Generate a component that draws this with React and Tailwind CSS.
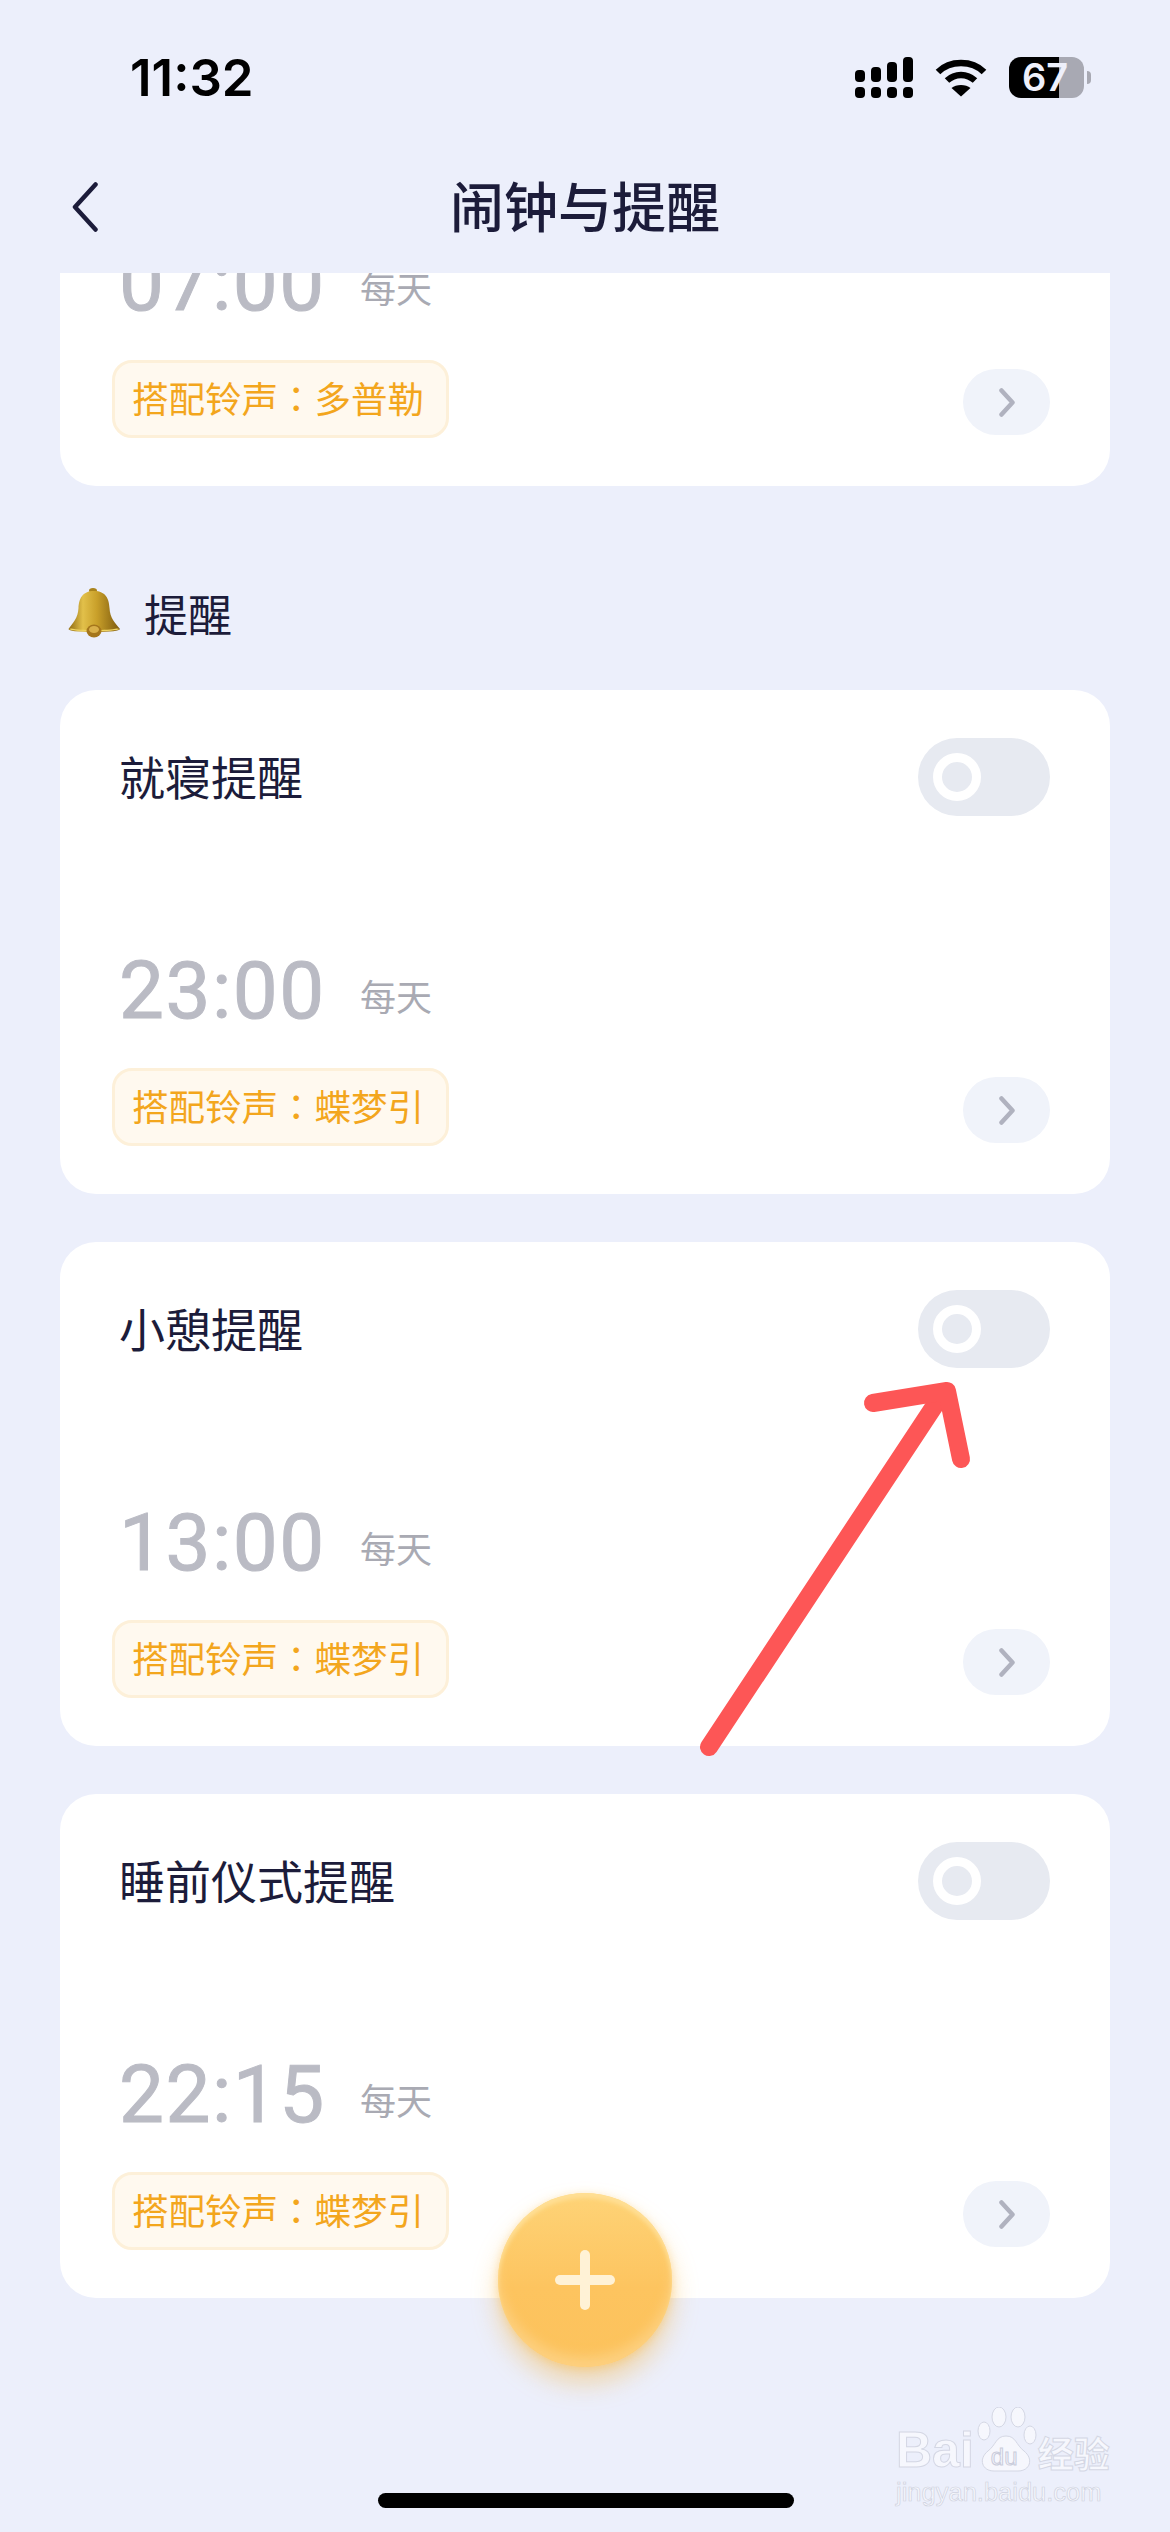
import React from 'react';

const cjk = "font-['Noto_Sans_CJK_SC','Noto_Sans',sans-serif]";

function Signal() {
  const tops = [70, 67, 62, 57];
  return (
    <svg width="58" height="42" viewBox="856 57 58 42" fill="#000">
      {tops.map((t, i) => (
        <g key={i}>
          <rect x={856 + i * 16} y={t} width="10" height={82 - t} rx="4" />
          <rect x={856 + i * 16} y="87" width="10" height="11" rx="4" />
        </g>
      ))}
    </svg>
  );
}

function Wifi() {
  return (
    <svg width="52" height="38" viewBox="0 0 52 38" fill="none" stroke="#000" strokeWidth="6.5">
      <path d="M3 13 C15 1 37 1 49 13" />
      <path d="M12 21.5 C20 14 32 14 40 21.5" />
      <path d="M26 37.5 L16.5 29 C21 25 31 25 35.5 29 Z" fill="#000" stroke="none" />
    </svg>
  );
}

function Battery() {
  return (
    <div className="flex items-center">
      <div className="relative w-[75px] h-[41px] flex">
        <div className="w-[50px] h-full bg-black rounded-l-[12px]" />
        <div className="w-[25px] h-full bg-[#a8a9b3] rounded-r-[12px]" />
        <span className="absolute left-[13px] top-0 leading-[41px] text-[38px] font-semibold text-[#eef0fb] font-['Inter',sans-serif]">67</span>
      </div>
      <div className="ml-[3px] w-[4px] h-[13px] rounded-r-full bg-[#a8a9b3]" />
    </div>
  );
}

function Bell() {
  return (
    <svg width="52" height="50" viewBox="0 0 52 50">
      <defs>
        <linearGradient id="bellBody" x1="0" y1="0" x2="1" y2="0">
          <stop offset="0" stopColor="#8f6a12" />
          <stop offset="0.28" stopColor="#e2c04a" />
          <stop offset="0.55" stopColor="#c9a02a" />
          <stop offset="1" stopColor="#7d5a0e" />
        </linearGradient>
      </defs>
      <ellipse cx="25" cy="2.5" rx="4" ry="2.5" fill="#a9831c" />
      <path d="M26 3 C14 3 11 11 10.5 20 C10 30 5 35 .5 41 C1 43 8 44 26 44 C44 44 51 43 52 41 C47 35 42 30 41.5 20 C41 11 38 3 26 3 Z" fill="url(#bellBody)" />
      <path d="M3 40.5 C12 42.5 40 42.5 49 40.5 L51.5 41 C48 44 4 44 1 41 Z" fill="#f0d565" />
      <ellipse cx="26" cy="43" rx="7.5" ry="6.5" fill="#a5761c" />
      <ellipse cx="26" cy="41.5" rx="5" ry="3.5" fill="#d9b04a" />
    </svg>
  );
}

function Chevron() {
  return (
    <svg width="16" height="29" viewBox="0 0 16 29" fill="none" stroke="#b0b2bf" strokeWidth="4.5" strokeLinecap="round" strokeLinejoin="round">
      <path d="M2.5 2.5 L13.5 14.5 L2.5 26.5" />
    </svg>
  );
}

function Tag({ ring }) {
  return (
    <div className="w-[337px] h-[78px] -ml-[8px] box-border rounded-[20px] border-[3px] border-[#fdf0d9] bg-[#fff9ef] pl-[17px] text-[36.5px] leading-[70px] whitespace-nowrap text-[#f3a61d]">
      搭配铃声<span className="font-['Noto_Sans_CJK_TC',sans-serif]">：</span>{ring}
    </div>
  );
}

function BottomRow({ ring }) {
  return (
    <div className="flex items-start justify-between">
      <Tag ring={ring} />
      <button className="w-[87px] h-[66px] mt-[9px] rounded-full bg-[#f0f3fa] flex items-center justify-center">
        <Chevron />
      </button>
    </div>
  );
}

function TimeRow({ time }) {
  return (
    <div className="flex items-start h-[80px]">
      <span className="w-[240px] -ml-[1px] text-[80px] leading-[80px] font-normal tracking-[1.5px] text-[#babbc4] font-['Roboto',sans-serif] [-webkit-text-stroke:1px_#babbc4]">{time}</span>
      <span className="ml-[1px] mt-[26px] text-[36px] leading-[36px] text-[#a9aab3]">每天</span>
    </div>
  );
}

function ReminderCard({ title, time, ring }) {
  return (
    <div className="bg-white rounded-[36px] h-[504px] pl-[60px] pr-[60px] pt-[48px]">
      <div className="flex items-center justify-between h-[78px]">
        <span className="text-[46px] leading-[60px] pb-[4px] -ml-[1px] text-[#1c1c3a]">{title}</span>
        <div className="w-[132px] h-[78px] rounded-full bg-[#e7eaf1] flex items-center pl-[15px]">
          <div className="w-[48px] h-[48px] rounded-full border-[9px] border-white" />
        </div>
      </div>
      <div className="mt-[135px]">
        <TimeRow time={time} />
      </div>
      <div className="mt-[37px]">
        <BottomRow ring={ring} />
      </div>
    </div>
  );
}

function Watermark() {
  return (
    <div className="absolute left-[896px] top-[2407px] w-[214px] text-[#f6f7fd]">
      <div className="flex items-end h-[65px]">
        <span className="text-[50px] leading-[44px] font-bold font-['Liberation_Sans',sans-serif] [-webkit-text-stroke:1px_#d4d7e4]">Bai</span>
        <div className="relative w-[64px] h-[65px]">
          <svg width="64" height="65" viewBox="0 0 64 65" fill="#f6f7fd" stroke="#d4d7e4" strokeWidth="1">
            <ellipse cx="10" cy="24" rx="6" ry="9" />
            <ellipse cx="25" cy="10" rx="7" ry="10" />
            <ellipse cx="44" cy="10" rx="7" ry="10" />
            <ellipse cx="56" cy="28" rx="6" ry="9" />
            <path d="M32 29 C22 29 22 38 14 44 C4 52 8 64 20 64 L44 64 C56 64 60 52 50 44 C42 38 42 29 32 29 Z" />
          </svg>
          <span className="absolute left-[17px] top-[38px] text-[24px] leading-[24px] text-[#f6f7fd] font-['Liberation_Sans',sans-serif] [-webkit-text-stroke:1px_#c9ccdb]">du</span>
        </div>
        <span className="text-[36px] leading-[40px] font-bold [-webkit-text-stroke:1px_#d4d7e4]">经验</span>
      </div>
      <div className="mt-[6px] text-[25.5px] leading-[28px] whitespace-nowrap font-['Liberation_Sans',sans-serif] [-webkit-text-stroke:0.7px_#cfd2e0] text-[#f6f7fd]">jingyan.baidu.com</div>
    </div>
  );
}

export default function App() {
  return (
    <div className={`relative w-[1170px] h-[2532px] overflow-hidden bg-[#eceffb] ${cjk}`}>
      {/* status bar + nav */}
      <div className="h-[273px]">
        <div className="flex items-start justify-between pt-[57px] pl-[130px] pr-[79px] h-[150px]">
          <span className="text-[51px] leading-[42px] font-semibold text-black font-['Inter',sans-serif]">11:32</span>
          <div className="flex items-start gap-[22px]">
            <Signal />
            <div className="mt-[2px]"><Wifi /></div>
            <Battery />
          </div>
        </div>
        <div className="grid grid-cols-[1fr_auto_1fr] items-center pl-[72px] pr-[72px] h-[114px]">
          <svg width="26" height="50" viewBox="0 0 26 50" fill="none" stroke="#1c1c3a" strokeWidth="4.5" strokeLinecap="round" strokeLinejoin="round">
            <path d="M23.5 2.5 L3 25 L23.5 47.5" />
          </svg>
          <span className="text-[54px] leading-[60px] pb-[4px] font-medium text-[#1c1c3a]">闹钟与提醒</span>
          <span />
        </div>
      </div>

      {/* scrolled content */}
      <div className="h-[2259px] overflow-hidden px-[60px]">
        <div className="bg-white rounded-[36px] h-[504px] px-[60px] -mt-[291px] pt-[261px]">
          <TimeRow time="07:00" />
          <div className="mt-[37px]">
            <BottomRow ring="多普勒" />
          </div>
        </div>

        <div className="h-[204px] flex items-center pl-[8px] pt-[50px]">
          <Bell />
          <span className="ml-[24px] text-[44px] leading-[60px] text-[#1c1c3a]">提醒</span>
        </div>

        <div className="flex flex-col gap-[48px]">
          <ReminderCard title="就寝提醒" time="23:00" ring="蝶梦引" />
          <ReminderCard title="小憩提醒" time="13:00" ring="蝶梦引" />
          <ReminderCard title="睡前仪式提醒" time="22:15" ring="蝶梦引" />
        </div>
      </div>

      {/* red annotation arrow */}
      <svg className="absolute left-[690px] top-[1370px]" width="290" height="400" viewBox="690 1370 290 400" fill="none" stroke="#fd5656" strokeWidth="18" strokeLinecap="round" strokeLinejoin="round">
        <path d="M709 1747 L943 1393" />
        <path d="M873 1403 L947 1391 L961 1459" />
      </svg>

      {/* add button */}
      <button className="absolute left-[498px] top-[2193px] w-[174px] h-[174px] rounded-full flex items-center justify-center bg-[linear-gradient(180deg,#fed377_0%,#fdc45f_55%,#fcc25c_100%)] shadow-[0_16px_26px_rgba(245,175,50,0.4),0_2px_8px_rgba(253,200,100,0.45),inset_0_5px_4px_#ffdf95,inset_0_-10px_12px_#fdd07f]">
        <svg width="60" height="60" viewBox="0 0 60 60" stroke="#fff2d6" strokeWidth="10" strokeLinecap="round">
          <path d="M30 5 L30 55" />
          <path d="M5 30 L55 30" />
        </svg>
      </button>

      {/* home indicator */}
      <div className="absolute left-[378px] top-[2493px] w-[416px] h-[15px] rounded-full bg-black" />

      <Watermark />
    </div>
  );
}
